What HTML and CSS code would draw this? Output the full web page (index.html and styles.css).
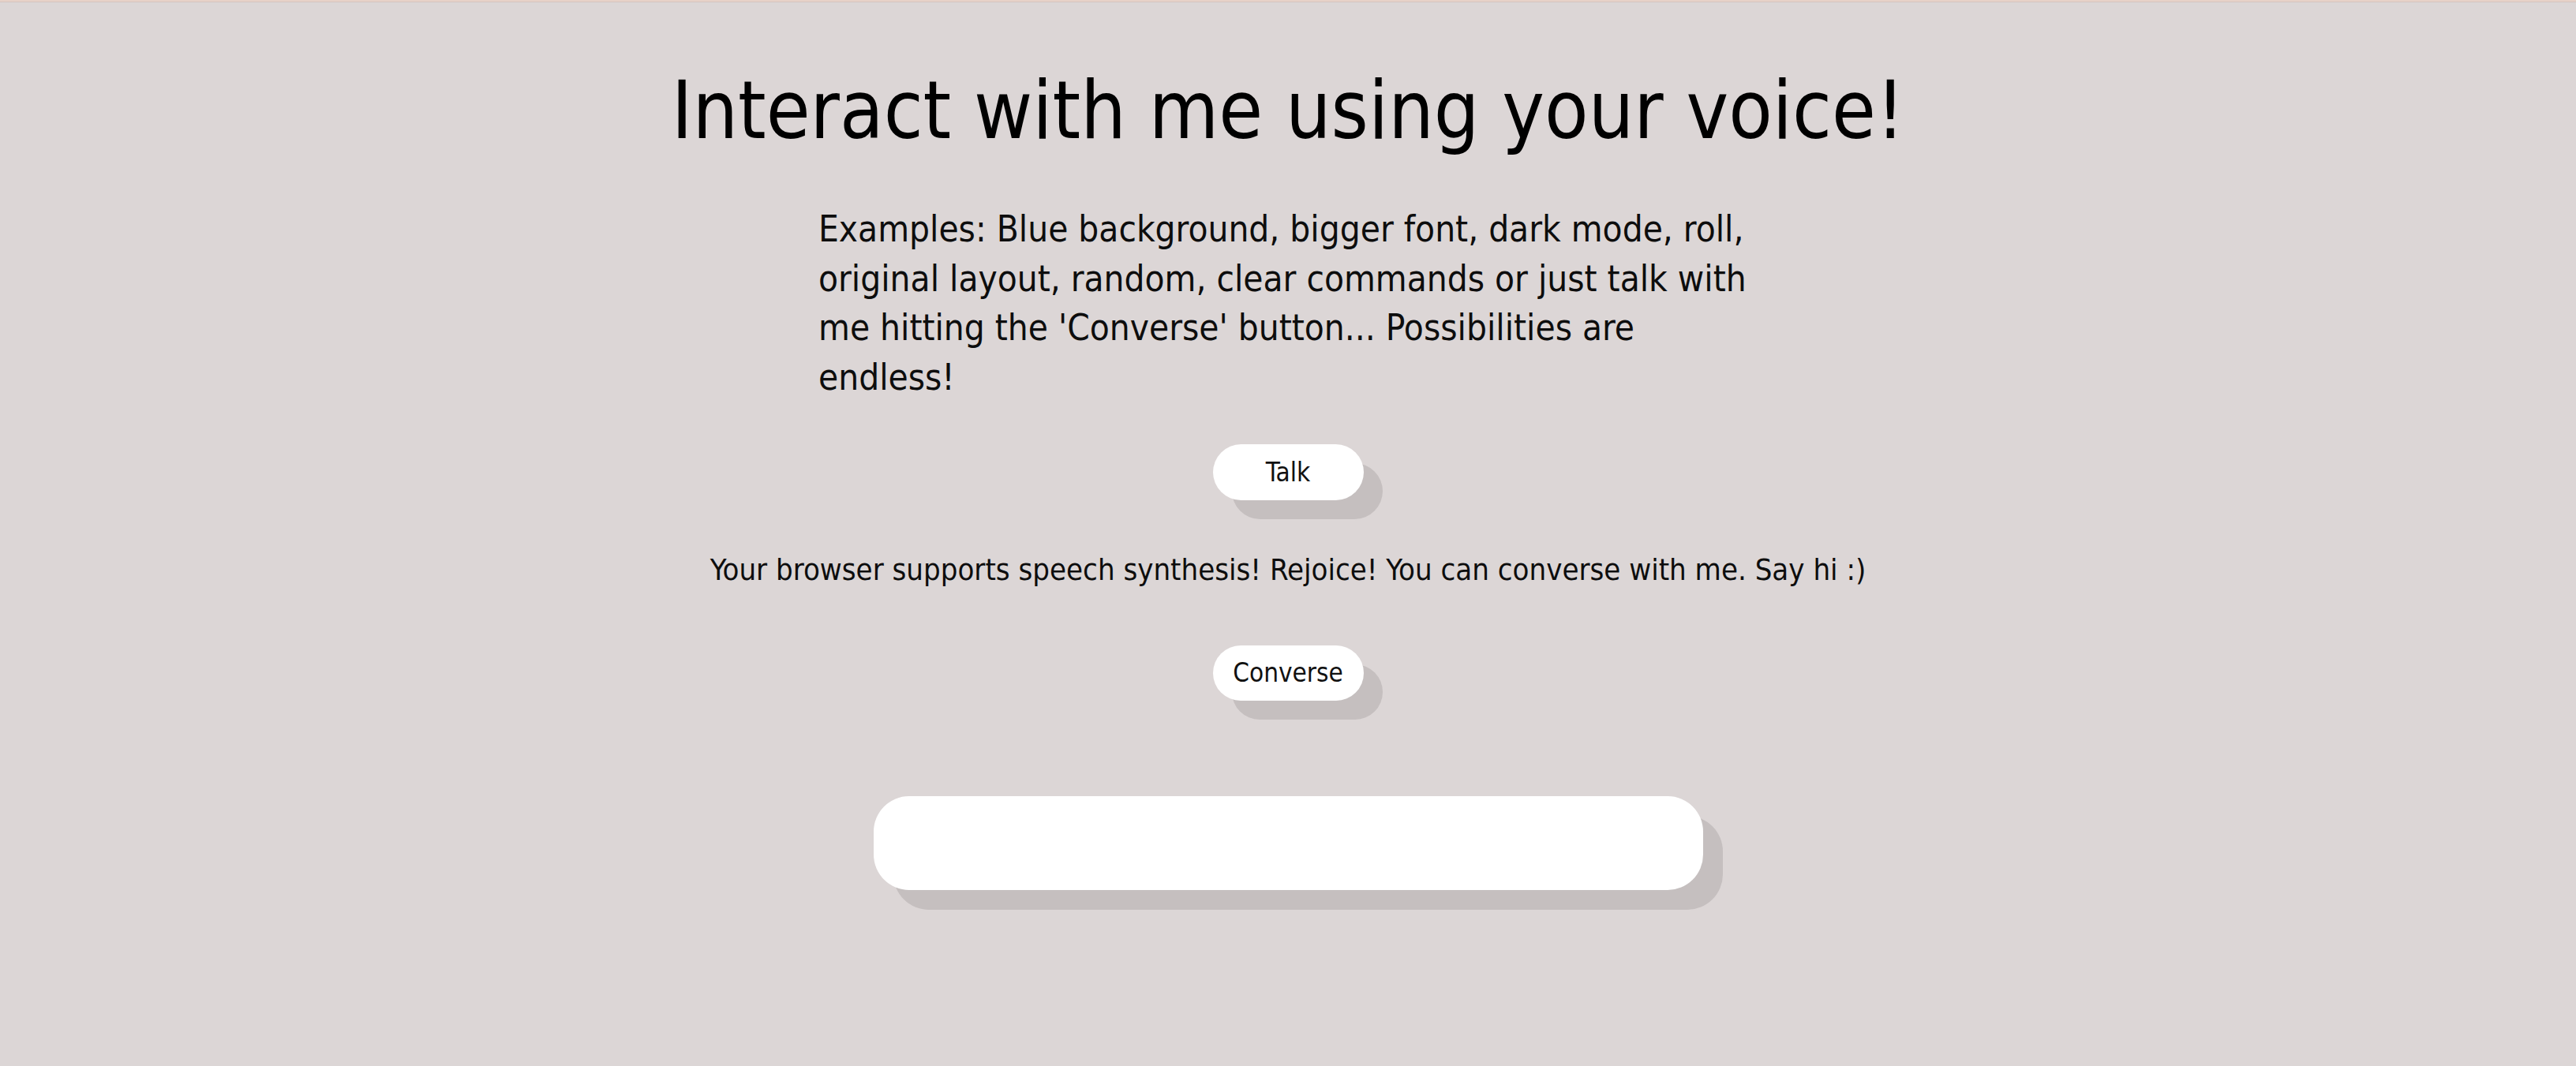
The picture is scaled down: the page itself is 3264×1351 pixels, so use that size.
FILE: index.html
```html
<!DOCTYPE html>
<html lang="en">
<head>
<meta charset="utf-8">
<title>Interact with me using your voice!</title>
<link rel="stylesheet" href="styles.css">
</head>
<body>
<main class="page">
  <h1 class="title">Interact with me using your voice!</h1>
  <p class="examples">Examples: Blue background, bigger font, dark mode, roll, original layout, random, clear commands or just talk with me hitting the 'Converse' button... Possibilities are endless!</p>
  <button class="btn btn-talk" type="button">Talk</button>
  <p class="status">Your browser supports speech synthesis! Rejoice! You can converse with me. Say hi :)</p>
  <button class="btn btn-converse" type="button">Converse</button>
  <div class="output"></div>
</main>
</body>
</html>
```
FILE: styles.css
```css
html {
  margin: 0;
  padding: 0;
  background: #dcd6d6;
  border-top: 2px solid #e7d1c8;
}
body {
  margin: 0;
  padding: 0;
  min-height: 1349px;
  box-sizing: border-box;
  border-top: 1px solid #d4c5c0;
  background: #dcd6d6;
  color: #000;
  font-family: "DejaVu Sans Condensed", "DejaVu Sans", sans-serif;
  font-stretch: condensed;
}
.page {
  display: flex;
  flex-direction: column;
  align-items: center;
  padding-top: 77px;
}
.title {
  margin: 0;
  font-size: 101px;
  font-weight: normal;
  line-height: 120px;
  color: #000;
}
.examples {
  width: 1190px;
  margin: 60px 0 0;
  font-size: 45.5px;
  line-height: 62.5px;
  color: #0d0d0d;
}
.btn {
  width: 191px;
  height: 71px;
  padding: 0;
  border: none;
  border-radius: 36px;
  background: #fff;
  color: #111;
  font-family: "DejaVu Sans Condensed", "DejaVu Sans", sans-serif;
  font-stretch: condensed;
  font-size: 33px;
  line-height: 38px;
  box-shadow: 24px 24px 0 #c5bfbf;
  cursor: pointer;
}
.btn-talk {
  margin-top: 53px;
}
.status {
  margin: 66px 0 0;
  font-size: 38px;
  line-height: 44px;
  color: #0d0d0d;
}
.btn-converse {
  margin-top: 74px;
  height: 70px;
}
.output {
  width: 1051px;
  height: 119px;
  margin-top: 121px;
  border-radius: 45px;
  background: #fff;
  box-shadow: 25px 25px 0 #c5bfbf;
}
```
